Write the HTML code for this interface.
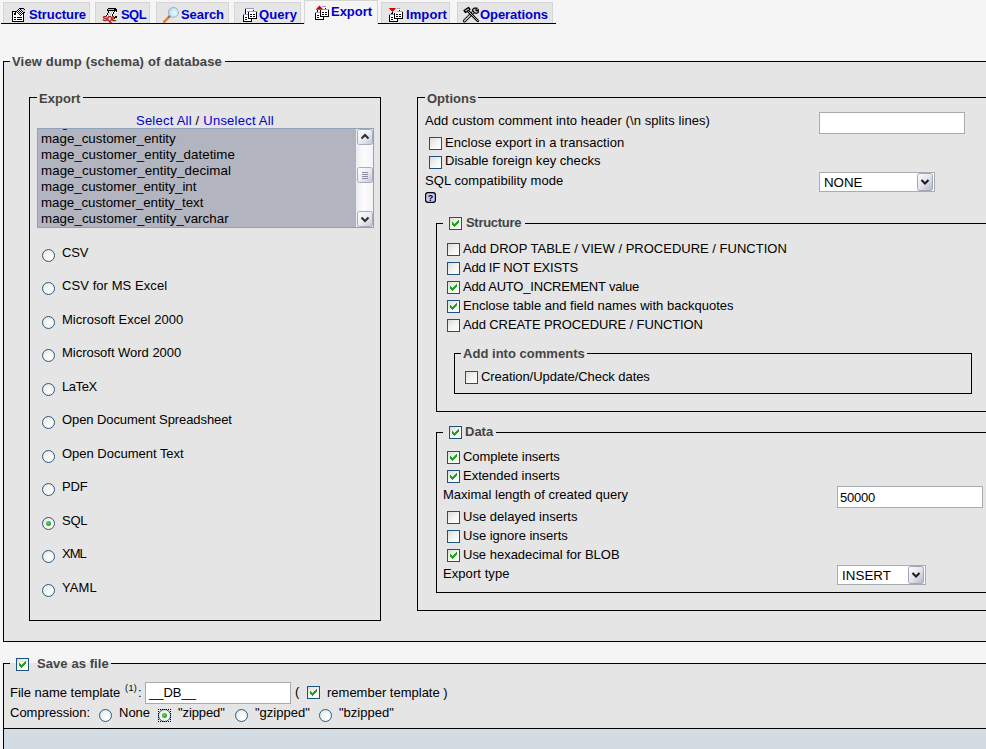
<!DOCTYPE html><html><head><meta charset="utf-8"><title>Export</title><style>
html,body{margin:0;padding:0;}
body{width:986px;height:749px;overflow:hidden;background:#f5f5f5;font-family:"Liberation Sans",Arial,sans-serif;font-size:13px;color:#000;position:relative;}
.a{position:absolute;}
.t{position:absolute;white-space:nowrap;line-height:16px;height:16px;}
.b{font-weight:bold;}
.lg{color:#444;font-weight:bold;}
.fs{position:absolute;border:1px solid #000;background:#e5e5e5;box-sizing:border-box;}
.tab{position:absolute;background:#e5e5e5;border:1px solid #d5d5d5;border-bottom:0;box-sizing:border-box;}
.tab.act{background:#f5f5f5;}
.lnk{color:#00c;}
.cb{position:absolute;width:13px;height:13px;box-sizing:border-box;border:1px solid #1c5180;background:linear-gradient(135deg,#dcdcd7 0%,#f3f3ef 50%,#fff 100%);}
.rb{position:absolute;width:13px;height:13px;box-sizing:border-box;border:1px solid #2b5a80;border-radius:50%;background:radial-gradient(circle at 65% 65%,#fff 0%,#f3f3ef 50%,#dcdcd7 100%);}
.inp{position:absolute;box-sizing:border-box;border:1px solid #a5acb2;background:#fff;}
.fc{font-size:13.33px;}
.gap{position:absolute;height:3px;}
</style></head><body>
<div class="a" style="left:1px;top:23px;width:555px;height:1px;background:#000"></div>
<div class="tab" style="left:3px;top:2px;width:87px;height:21px"></div>
<span class="t b lnk" style="left:29px;top:7px;letter-spacing:-0.089px;">Structure</span>
<div class="tab" style="left:95px;top:2px;width:55px;height:21px"></div>
<span class="t b lnk" style="left:121px;top:7px;letter-spacing:-0.578px;">SQL</span>
<div class="tab" style="left:156px;top:2px;width:73px;height:21px"></div>
<span class="t b lnk" style="left:181px;top:7px;letter-spacing:-0.062px;">Search</span>
<div class="tab" style="left:234px;top:2px;width:67px;height:21px"></div>
<span class="t b lnk" style="left:259px;top:7px;letter-spacing:0.084px;">Query</span>
<div class="tab act" style="left:304px;top:0px;width:74px;height:24px"></div>
<span class="t b lnk" style="left:331px;top:4px;letter-spacing:-0.029px;">Export</span>
<div class="tab" style="left:381px;top:2px;width:69px;height:21px"></div>
<span class="t b lnk" style="left:406px;top:7px;letter-spacing:0.091px;">Import</span>
<div class="tab" style="left:457px;top:2px;width:96px;height:21px"></div>
<span class="t b lnk" style="left:480px;top:7px;letter-spacing:-0.062px;">Operations</span>
<svg class="a" style="left:0;top:0" width="560" height="24" viewBox="0 0 560 24"><g shape-rendering="crispEdges"><rect x="19" y="8" width="5" height="1" fill="#000"/><rect x="18" y="9" width="1" height="1" fill="#000"/><rect x="19" y="9" width="1" height="1" fill="#fff"/><rect x="20" y="9" width="1" height="1" fill="#000"/><rect x="21" y="9" width="3" height="1" fill="#c8c8e8"/><rect x="24" y="9" width="1" height="1" fill="#000"/><rect x="17" y="10" width="1" height="1" fill="#000"/><rect x="18" y="10" width="1" height="1" fill="#fff"/><rect x="19" y="10" width="1" height="1" fill="#000"/><rect x="20" y="10" width="1" height="1" fill="#fff"/><rect x="21" y="10" width="1" height="1" fill="#000"/><rect x="22" y="10" width="3" height="1" fill="#c8c8e8"/><rect x="12" y="11" width="5" height="1" fill="#000"/><rect x="17" y="11" width="1" height="1" fill="#fff"/><rect x="18" y="11" width="1" height="1" fill="#000"/><rect x="19" y="11" width="1" height="1" fill="#fff"/><rect x="20" y="11" width="1" height="1" fill="#000"/><rect x="21" y="11" width="1" height="1" fill="#fff"/><rect x="22" y="11" width="1" height="1" fill="#000"/><rect x="23" y="11" width="2" height="1" fill="#c8c8e8"/><rect x="12" y="12" width="1" height="1" fill="#000"/><rect x="13" y="12" width="2" height="1" fill="#fff"/><rect x="15" y="12" width="1" height="1" fill="#000"/><rect x="16" y="12" width="1" height="1" fill="#fff"/><rect x="17" y="12" width="1" height="1" fill="#000"/><rect x="18" y="12" width="1" height="1" fill="#fff"/><rect x="19" y="12" width="1" height="1" fill="#000"/><rect x="20" y="12" width="1" height="1" fill="#fff"/><rect x="21" y="12" width="1" height="1" fill="#000"/><rect x="22" y="12" width="1" height="1" fill="#fff"/><rect x="23" y="12" width="2" height="1" fill="#000"/><rect x="12" y="13" width="1" height="1" fill="#000"/><rect x="13" y="13" width="1" height="1" fill="#fff"/><rect x="14" y="13" width="2" height="1" fill="#000"/><rect x="16" y="13" width="2" height="1" fill="#fff"/><rect x="18" y="13" width="1" height="1" fill="#000"/><rect x="19" y="13" width="1" height="1" fill="#fff"/><rect x="20" y="13" width="1" height="1" fill="#000"/><rect x="21" y="13" width="1" height="1" fill="#fff"/><rect x="22" y="13" width="2" height="1" fill="#000"/><rect x="12" y="14" width="1" height="1" fill="#000"/><rect x="13" y="14" width="1" height="1" fill="#fff"/><rect x="14" y="14" width="2" height="1" fill="#000"/><rect x="16" y="14" width="3" height="1" fill="#fff"/><rect x="19" y="14" width="1" height="1" fill="#000"/><rect x="20" y="14" width="1" height="1" fill="#fff"/><rect x="21" y="14" width="1" height="1" fill="#000"/><rect x="22" y="14" width="1" height="1" fill="#fff"/><rect x="23" y="14" width="1" height="1" fill="#000"/><rect x="12" y="15" width="1" height="1" fill="#000"/><rect x="13" y="15" width="7" height="1" fill="#fff"/><rect x="20" y="15" width="1" height="1" fill="#000"/><rect x="21" y="15" width="2" height="1" fill="#fff"/><rect x="23" y="15" width="1" height="1" fill="#000"/><rect x="12" y="16" width="1" height="1" fill="#000"/><rect x="13" y="16" width="10" height="1" fill="#fff"/><rect x="23" y="16" width="1" height="1" fill="#000"/><rect x="12" y="17" width="1" height="1" fill="#000"/><rect x="13" y="17" width="1" height="1" fill="#fff"/><rect x="14" y="17" width="2" height="1" fill="#000"/><rect x="16" y="17" width="1" height="1" fill="#fff"/><rect x="17" y="17" width="5" height="1" fill="#000"/><rect x="22" y="17" width="1" height="1" fill="#fff"/><rect x="23" y="17" width="1" height="1" fill="#000"/><rect x="12" y="18" width="1" height="1" fill="#000"/><rect x="13" y="18" width="10" height="1" fill="#fff"/><rect x="23" y="18" width="1" height="1" fill="#000"/><rect x="12" y="19" width="1" height="1" fill="#000"/><rect x="13" y="19" width="1" height="1" fill="#fff"/><rect x="14" y="19" width="2" height="1" fill="#000"/><rect x="16" y="19" width="1" height="1" fill="#fff"/><rect x="17" y="19" width="5" height="1" fill="#000"/><rect x="22" y="19" width="1" height="1" fill="#fff"/><rect x="23" y="19" width="1" height="1" fill="#000"/><rect x="12" y="20" width="1" height="1" fill="#000"/><rect x="13" y="20" width="10" height="1" fill="#fff"/><rect x="23" y="20" width="1" height="1" fill="#000"/><rect x="12" y="21" width="12" height="1" fill="#000"/><rect x="108" y="8" width="8" height="1" fill="#000"/><rect x="107" y="9" width="1" height="1" fill="#000"/><rect x="108" y="9" width="6" height="1" fill="#bbb"/><rect x="114" y="9" width="3" height="1" fill="#000"/><rect x="107" y="10" width="10" height="1" fill="#000"/><rect x="108" y="11" width="1" height="1" fill="#000"/><rect x="109" y="11" width="1" height="1" fill="#fff"/><rect x="110" y="11" width="1" height="1" fill="#bbb"/><rect x="111" y="11" width="1" height="1" fill="#fff"/><rect x="112" y="11" width="1" height="1" fill="#bbb"/><rect x="113" y="11" width="1" height="1" fill="#fff"/><rect x="114" y="11" width="1" height="1" fill="#000"/><rect x="115" y="11" width="1" height="1" fill="#fff"/><rect x="116" y="11" width="1" height="1" fill="#000"/><rect x="108" y="12" width="1" height="1" fill="#000"/><rect x="109" y="12" width="1" height="1" fill="#bbb"/><rect x="110" y="12" width="1" height="1" fill="#fff"/><rect x="111" y="12" width="1" height="1" fill="#bbb"/><rect x="112" y="12" width="1" height="1" fill="#fff"/><rect x="113" y="12" width="1" height="1" fill="#000"/><rect x="114" y="12" width="1" height="1" fill="#fff"/><rect x="107" y="13" width="1" height="1" fill="#000"/><rect x="108" y="13" width="1" height="1" fill="#fff"/><rect x="109" y="13" width="1" height="1" fill="#bbb"/><rect x="110" y="13" width="1" height="1" fill="#fff"/><rect x="111" y="13" width="1" height="1" fill="#bbb"/><rect x="112" y="13" width="1" height="1" fill="#fff"/><rect x="113" y="13" width="1" height="1" fill="#000"/><rect x="107" y="14" width="1" height="1" fill="#000"/><rect x="108" y="14" width="1" height="1" fill="#bbb"/><rect x="109" y="14" width="1" height="1" fill="#fff"/><rect x="110" y="14" width="1" height="1" fill="#bbb"/><rect x="111" y="14" width="1" height="1" fill="#fff"/><rect x="112" y="14" width="1" height="1" fill="#000"/><rect x="113" y="14" width="1" height="1" fill="#fff"/><rect x="106" y="15" width="1" height="1" fill="#000"/><rect x="107" y="15" width="1" height="1" fill="#fff"/><rect x="108" y="15" width="1" height="1" fill="#bbb"/><rect x="109" y="15" width="1" height="1" fill="#fff"/><rect x="110" y="15" width="1" height="1" fill="#bbb"/><rect x="111" y="15" width="1" height="1" fill="#fff"/><rect x="112" y="15" width="1" height="1" fill="#000"/><rect x="113" y="16" width="1" height="1" fill="#000"/><rect x="114" y="16" width="1" height="1" fill="#fff"/><rect x="115" y="16" width="2" height="1" fill="#000"/><rect x="114" y="17" width="3" height="1" fill="#000"/><rect x="114" y="18" width="1" height="1" fill="#000"/><rect x="245" y="8" width="9" height="1" fill="#9a9acb"/><rect x="245" y="9" width="1" height="1" fill="#000"/><rect x="246" y="9" width="7" height="1" fill="#fff"/><rect x="245" y="10" width="1" height="1" fill="#000"/><rect x="246" y="10" width="7" height="1" fill="#fff"/><rect x="253" y="10" width="1" height="1" fill="#000"/><rect x="254" y="10" width="1" height="1" fill="#fff"/><rect x="245" y="11" width="1" height="1" fill="#000"/><rect x="246" y="11" width="1" height="1" fill="#fff"/><rect x="247" y="11" width="10" height="1" fill="#9a9acb"/><rect x="245" y="12" width="1" height="1" fill="#000"/><rect x="246" y="12" width="2" height="1" fill="#fff"/><rect x="248" y="12" width="1" height="1" fill="#000"/><rect x="249" y="12" width="7" height="1" fill="#fff"/><rect x="256" y="12" width="1" height="1" fill="#000"/><rect x="245" y="13" width="1" height="1" fill="#000"/><rect x="246" y="13" width="2" height="1" fill="#fff"/><rect x="248" y="13" width="1" height="1" fill="#000"/><rect x="249" y="13" width="7" height="1" fill="#fff"/><rect x="256" y="13" width="1" height="1" fill="#000"/><rect x="243" y="14" width="5" height="1" fill="#9a9acb"/><rect x="248" y="14" width="1" height="1" fill="#000"/><rect x="249" y="14" width="1" height="1" fill="#fff"/><rect x="250" y="14" width="2" height="1" fill="#000"/><rect x="252" y="14" width="1" height="1" fill="#fff"/><rect x="253" y="14" width="2" height="1" fill="#000"/><rect x="255" y="14" width="1" height="1" fill="#fff"/><rect x="256" y="14" width="1" height="1" fill="#000"/><rect x="243" y="15" width="1" height="1" fill="#000"/><rect x="244" y="15" width="4" height="1" fill="#fff"/><rect x="248" y="15" width="1" height="1" fill="#000"/><rect x="249" y="15" width="7" height="1" fill="#fff"/><rect x="256" y="15" width="1" height="1" fill="#000"/><rect x="243" y="16" width="1" height="1" fill="#000"/><rect x="244" y="16" width="4" height="1" fill="#fff"/><rect x="248" y="16" width="1" height="1" fill="#000"/><rect x="249" y="16" width="1" height="1" fill="#fff"/><rect x="250" y="16" width="2" height="1" fill="#000"/><rect x="252" y="16" width="1" height="1" fill="#fff"/><rect x="253" y="16" width="2" height="1" fill="#000"/><rect x="255" y="16" width="1" height="1" fill="#fff"/><rect x="256" y="16" width="1" height="1" fill="#000"/><rect x="243" y="17" width="1" height="1" fill="#000"/><rect x="244" y="17" width="1" height="1" fill="#fff"/><rect x="245" y="17" width="2" height="1" fill="#000"/><rect x="247" y="17" width="1" height="1" fill="#fff"/><rect x="248" y="17" width="1" height="1" fill="#000"/><rect x="249" y="17" width="7" height="1" fill="#fff"/><rect x="256" y="17" width="1" height="1" fill="#000"/><rect x="243" y="18" width="1" height="1" fill="#000"/><rect x="244" y="18" width="4" height="1" fill="#fff"/><rect x="248" y="18" width="9" height="1" fill="#000"/><rect x="243" y="19" width="1" height="1" fill="#000"/><rect x="244" y="19" width="1" height="1" fill="#fff"/><rect x="245" y="19" width="2" height="1" fill="#000"/><rect x="247" y="19" width="4" height="1" fill="#fff"/><rect x="251" y="19" width="1" height="1" fill="#000"/><rect x="243" y="20" width="1" height="1" fill="#000"/><rect x="244" y="20" width="7" height="1" fill="#fff"/><rect x="251" y="20" width="1" height="1" fill="#000"/><rect x="243" y="21" width="9" height="1" fill="#000"/><rect x="317" y="6" width="9" height="1" fill="#9a9acb"/><rect x="317" y="7" width="1" height="1" fill="#000"/><rect x="318" y="7" width="7" height="1" fill="#fff"/><rect x="317" y="8" width="1" height="1" fill="#000"/><rect x="318" y="8" width="7" height="1" fill="#fff"/><rect x="325" y="8" width="1" height="1" fill="#000"/><rect x="326" y="8" width="1" height="1" fill="#fff"/><rect x="317" y="9" width="1" height="1" fill="#000"/><rect x="318" y="9" width="1" height="1" fill="#fff"/><rect x="319" y="9" width="10" height="1" fill="#9a9acb"/><rect x="317" y="10" width="1" height="1" fill="#000"/><rect x="318" y="10" width="2" height="1" fill="#fff"/><rect x="320" y="10" width="1" height="1" fill="#000"/><rect x="321" y="10" width="7" height="1" fill="#fff"/><rect x="328" y="10" width="1" height="1" fill="#000"/><rect x="317" y="11" width="1" height="1" fill="#000"/><rect x="318" y="11" width="2" height="1" fill="#fff"/><rect x="320" y="11" width="1" height="1" fill="#000"/><rect x="321" y="11" width="7" height="1" fill="#fff"/><rect x="328" y="11" width="1" height="1" fill="#000"/><rect x="315" y="12" width="5" height="1" fill="#9a9acb"/><rect x="320" y="12" width="1" height="1" fill="#000"/><rect x="321" y="12" width="1" height="1" fill="#fff"/><rect x="322" y="12" width="2" height="1" fill="#000"/><rect x="324" y="12" width="1" height="1" fill="#fff"/><rect x="325" y="12" width="2" height="1" fill="#000"/><rect x="327" y="12" width="1" height="1" fill="#fff"/><rect x="328" y="12" width="1" height="1" fill="#000"/><rect x="315" y="13" width="1" height="1" fill="#000"/><rect x="316" y="13" width="4" height="1" fill="#fff"/><rect x="320" y="13" width="1" height="1" fill="#000"/><rect x="321" y="13" width="7" height="1" fill="#fff"/><rect x="328" y="13" width="1" height="1" fill="#000"/><rect x="315" y="14" width="1" height="1" fill="#000"/><rect x="316" y="14" width="4" height="1" fill="#fff"/><rect x="320" y="14" width="1" height="1" fill="#000"/><rect x="321" y="14" width="1" height="1" fill="#fff"/><rect x="322" y="14" width="2" height="1" fill="#000"/><rect x="324" y="14" width="1" height="1" fill="#fff"/><rect x="325" y="14" width="2" height="1" fill="#000"/><rect x="327" y="14" width="1" height="1" fill="#fff"/><rect x="328" y="14" width="1" height="1" fill="#000"/><rect x="315" y="15" width="1" height="1" fill="#000"/><rect x="316" y="15" width="1" height="1" fill="#fff"/><rect x="317" y="15" width="2" height="1" fill="#000"/><rect x="319" y="15" width="1" height="1" fill="#fff"/><rect x="320" y="15" width="1" height="1" fill="#000"/><rect x="321" y="15" width="7" height="1" fill="#fff"/><rect x="328" y="15" width="1" height="1" fill="#000"/><rect x="315" y="16" width="1" height="1" fill="#000"/><rect x="316" y="16" width="4" height="1" fill="#fff"/><rect x="320" y="16" width="9" height="1" fill="#000"/><rect x="315" y="17" width="1" height="1" fill="#000"/><rect x="316" y="17" width="1" height="1" fill="#fff"/><rect x="317" y="17" width="2" height="1" fill="#000"/><rect x="319" y="17" width="4" height="1" fill="#fff"/><rect x="323" y="17" width="1" height="1" fill="#000"/><rect x="315" y="18" width="1" height="1" fill="#000"/><rect x="316" y="18" width="7" height="1" fill="#fff"/><rect x="323" y="18" width="1" height="1" fill="#000"/><rect x="315" y="19" width="9" height="1" fill="#000"/><rect x="315" y="8" width="8" height="2" fill="#f5f5f5"/><rect x="317" y="6" width="5" height="2" fill="#f5f5f5"/></g><path d="M319.5 5.5 L323.5 9.8 L315.5 9.8 Z" fill="#d40000"/><g shape-rendering="crispEdges"><rect x="391" y="8" width="9" height="1" fill="#9a9acb"/><rect x="391" y="9" width="1" height="1" fill="#000"/><rect x="392" y="9" width="7" height="1" fill="#fff"/><rect x="391" y="10" width="1" height="1" fill="#000"/><rect x="392" y="10" width="7" height="1" fill="#fff"/><rect x="399" y="10" width="1" height="1" fill="#000"/><rect x="400" y="10" width="1" height="1" fill="#fff"/><rect x="391" y="11" width="1" height="1" fill="#000"/><rect x="392" y="11" width="1" height="1" fill="#fff"/><rect x="393" y="11" width="10" height="1" fill="#9a9acb"/><rect x="391" y="12" width="1" height="1" fill="#000"/><rect x="392" y="12" width="2" height="1" fill="#fff"/><rect x="394" y="12" width="1" height="1" fill="#000"/><rect x="395" y="12" width="7" height="1" fill="#fff"/><rect x="402" y="12" width="1" height="1" fill="#000"/><rect x="391" y="13" width="1" height="1" fill="#000"/><rect x="392" y="13" width="2" height="1" fill="#fff"/><rect x="394" y="13" width="1" height="1" fill="#000"/><rect x="395" y="13" width="7" height="1" fill="#fff"/><rect x="402" y="13" width="1" height="1" fill="#000"/><rect x="389" y="14" width="5" height="1" fill="#9a9acb"/><rect x="394" y="14" width="1" height="1" fill="#000"/><rect x="395" y="14" width="1" height="1" fill="#fff"/><rect x="396" y="14" width="2" height="1" fill="#000"/><rect x="398" y="14" width="1" height="1" fill="#fff"/><rect x="399" y="14" width="2" height="1" fill="#000"/><rect x="401" y="14" width="1" height="1" fill="#fff"/><rect x="402" y="14" width="1" height="1" fill="#000"/><rect x="389" y="15" width="1" height="1" fill="#000"/><rect x="390" y="15" width="4" height="1" fill="#fff"/><rect x="394" y="15" width="1" height="1" fill="#000"/><rect x="395" y="15" width="7" height="1" fill="#fff"/><rect x="402" y="15" width="1" height="1" fill="#000"/><rect x="389" y="16" width="1" height="1" fill="#000"/><rect x="390" y="16" width="4" height="1" fill="#fff"/><rect x="394" y="16" width="1" height="1" fill="#000"/><rect x="395" y="16" width="1" height="1" fill="#fff"/><rect x="396" y="16" width="2" height="1" fill="#000"/><rect x="398" y="16" width="1" height="1" fill="#fff"/><rect x="399" y="16" width="2" height="1" fill="#000"/><rect x="401" y="16" width="1" height="1" fill="#fff"/><rect x="402" y="16" width="1" height="1" fill="#000"/><rect x="389" y="17" width="1" height="1" fill="#000"/><rect x="390" y="17" width="1" height="1" fill="#fff"/><rect x="391" y="17" width="2" height="1" fill="#000"/><rect x="393" y="17" width="1" height="1" fill="#fff"/><rect x="394" y="17" width="1" height="1" fill="#000"/><rect x="395" y="17" width="7" height="1" fill="#fff"/><rect x="402" y="17" width="1" height="1" fill="#000"/><rect x="389" y="18" width="1" height="1" fill="#000"/><rect x="390" y="18" width="4" height="1" fill="#fff"/><rect x="394" y="18" width="9" height="1" fill="#000"/><rect x="389" y="19" width="1" height="1" fill="#000"/><rect x="390" y="19" width="1" height="1" fill="#fff"/><rect x="391" y="19" width="2" height="1" fill="#000"/><rect x="393" y="19" width="4" height="1" fill="#fff"/><rect x="397" y="19" width="1" height="1" fill="#000"/><rect x="389" y="20" width="1" height="1" fill="#000"/><rect x="390" y="20" width="7" height="1" fill="#fff"/><rect x="397" y="20" width="1" height="1" fill="#000"/><rect x="389" y="21" width="9" height="1" fill="#000"/><rect x="388" y="7" width="9" height="6" fill="#e5e5e5"/></g><path d="M388.8 8 L396.2 8 L392.5 12 Z" fill="#d40000"/><rect x="392" y="12" width="1" height="2" fill="#000"/><text x="102.8" y="21" font-family="Liberation Sans,Arial,sans-serif" font-size="6.8" font-weight="bold" fill="#a80000" stroke="#a80000" stroke-width="0.25" textLength="13.4" lengthAdjust="spacing">SQL</text><defs><radialGradient id="lens" cx="0.6" cy="0.55" r="0.7"><stop offset="0" stop-color="#e4fbfb"/><stop offset="0.6" stop-color="#c2e8f6"/><stop offset="1" stop-color="#8cc4ea"/></radialGradient></defs><line x1="169.3" y1="16.6" x2="164.2" y2="21.8" stroke="#e0802f" stroke-width="2.6" stroke-linecap="round"/><line x1="169.8" y1="16.2" x2="168.6" y2="17.4" stroke="#777" stroke-width="2.4"/><circle cx="173.4" cy="12.4" r="4.9" fill="url(#lens)" stroke="#8a8f94" stroke-width="0.9" stroke-dasharray="2.2 1"/><g fill="none" stroke-linecap="round"><path d="M464.5 20.8 L474.8 10.6" stroke="#000" stroke-width="3.2"/><path d="M464.6 20.7 L474.8 10.6" stroke="#c8c8dc" stroke-width="1.5"/><path d="M468 11 L477.8 20.8" stroke="#000" stroke-width="2.6"/><path d="M468 11 L477.8 20.8" stroke="#c8c8dc" stroke-width="0.9"/><path d="M464 10.5 L468.5 7.5 L470 9.5 L465.5 12.5 Z" fill="#b8b8d0" stroke="#000" stroke-width="1.3" stroke-linejoin="round"/><path d="M472.4 9.6 L474 8.1 L477.2 8.1 L475.7 10 L477.2 11 L478.3 9.4 L478.3 12.6 L476.2 13.4 L474.3 12.6 L473.2 11.2 Z" fill="#c8c8dc" stroke="#000" stroke-width="1.1" stroke-linejoin="round"/></g></svg>
<div class="fs" style="left:3px;top:61px;width:1000px;height:581px"></div>
<div class="a" style="left:10px;top:54px;width:215px;height:7px;background:#f5f5f5"></div>
<div class="a" style="left:10px;top:61px;width:215px;height:1px;background:#e5e5e5"></div>
<span class="t lg" style="left:12px;top:54px;letter-spacing:0.169px;">View dump (schema) of database</span>
<div class="fs" style="left:29px;top:97px;width:352px;height:524px"></div>
<div class="a" style="left:37px;top:97px;width:46px;height:1px;background:#e5e5e5"></div>
<span class="t lg" style="left:39px;top:91px;letter-spacing:0.055px;">Export</span>
<span class="t " style="left:136px;top:113px;letter-spacing:0.230px;"><span class="lnk">Select All</span> / <span class="lnk">Unselect All</span></span>
<div class="a" style="left:37px;top:128px;width:337px;height:100px;box-sizing:border-box;border:1px solid #8fa3bd;background:#fff;overflow:hidden"><div class="a" style="left:0;top:0;width:318px;height:98px;background:#b2b4bf"></div><div class="a" style="left:318px;top:0;width:17px;height:98px;background:linear-gradient(90deg,#e9e9f0,#fbfbfd 40%,#f4f4f8)"></div><svg class="a" style="left:319px;top:0px" width="16" height="16" viewBox="0 0 16 16"><defs><linearGradient id="sbup" x1="0" y1="0" x2="1" y2="1"><stop offset="0" stop-color="#ffffff"/><stop offset="0.5" stop-color="#ececf2"/><stop offset="1" stop-color="#c4c5d6"/></linearGradient></defs><rect x="0.5" y="0.5" width="15" height="15" rx="2" fill="url(#sbup)" stroke="#a9abbd"/><path d="M4.5 9.5 L8 6 L11.5 9.5" fill="none" stroke="#2b2b33" stroke-width="2"/></svg><svg class="a" style="left:319px;top:38px" width="16" height="16" viewBox="0 0 16 16"><defs><linearGradient id="sbthumb" x1="0" y1="0" x2="1" y2="1"><stop offset="0" stop-color="#ffffff"/><stop offset="0.5" stop-color="#ececf2"/><stop offset="1" stop-color="#c4c5d6"/></linearGradient></defs><rect x="0.5" y="0.5" width="15" height="15" rx="2" fill="url(#sbthumb)" stroke="#a9abbd"/><path d="M5 5.5h6M5 7.5h6M5 9.5h6M5 11.5h6" stroke="#8e8ea0" stroke-width="1"/></svg><svg class="a" style="left:319px;top:82px" width="16" height="16" viewBox="0 0 16 16"><defs><linearGradient id="sbdown" x1="0" y1="0" x2="1" y2="1"><stop offset="0" stop-color="#ffffff"/><stop offset="0.5" stop-color="#ececf2"/><stop offset="1" stop-color="#c4c5d6"/></linearGradient></defs><rect x="0.5" y="0.5" width="15" height="15" rx="2" fill="url(#sbdown)" stroke="#a9abbd"/><path d="M4.5 6.5 L8 10 L11.5 6.5" fill="none" stroke="#2b2b33" stroke-width="2"/></svg><div class="a" style="left:25px;top:0px;width:4px;height:1px;background:#333"></div></div>
<span class="t fc" style="left:41px;top:131px;letter-spacing:-0.007px;">mage_customer_entity</span>
<span class="t fc" style="left:41px;top:147px;letter-spacing:0.018px;">mage_customer_entity_datetime</span>
<span class="t fc" style="left:41px;top:163px;letter-spacing:0.062px;">mage_customer_entity_decimal</span>
<span class="t fc" style="left:41px;top:179px;letter-spacing:-0.039px;">mage_customer_entity_int</span>
<span class="t fc" style="left:41px;top:195px;letter-spacing:-0.057px;">mage_customer_entity_text</span>
<span class="t fc" style="left:41px;top:211px;letter-spacing:0.033px;">mage_customer_entity_varchar</span>
<div class="rb" style="left:42px;top:249px"></div>
<span class="t " style="left:62px;top:245px;letter-spacing:-0.111px;">CSV</span>
<div class="rb" style="left:42px;top:282px"></div>
<span class="t " style="left:62px;top:278px;letter-spacing:0.073px;">CSV for MS Excel</span>
<div class="rb" style="left:42px;top:316px"></div>
<span class="t " style="left:62px;top:312px;letter-spacing:0.026px;">Microsoft Excel 2000</span>
<div class="rb" style="left:42px;top:349px"></div>
<span class="t " style="left:62px;top:345px;letter-spacing:-0.026px;">Microsoft Word 2000</span>
<div class="rb" style="left:42px;top:383px"></div>
<span class="t " style="left:62px;top:379px;letter-spacing:-0.435px;">LaTeX</span>
<div class="rb" style="left:42px;top:416px"></div>
<span class="t " style="left:62px;top:412px;letter-spacing:-0.084px;">Open Document Spreadsheet</span>
<div class="rb" style="left:42px;top:450px"></div>
<span class="t " style="left:62px;top:446px;letter-spacing:-0.011px;">Open Document Text</span>
<div class="rb" style="left:42px;top:483px"></div>
<span class="t " style="left:62px;top:479px;letter-spacing:-0.200px;">PDF</span>
<div class="rb" style="left:42px;top:517px"><div class="a" style="left:3px;top:3px;width:5px;height:5px;border-radius:50%;background:radial-gradient(circle at 40% 40%,#6ad66a,#21a121 70%)"></div></div>
<span class="t " style="left:62px;top:513px;letter-spacing:-0.205px;">SQL</span>
<div class="rb" style="left:42px;top:550px"></div>
<span class="t " style="left:62px;top:546px;letter-spacing:-0.978px;">XML</span>
<div class="rb" style="left:42px;top:584px"></div>
<span class="t " style="left:62px;top:580px;letter-spacing:0.066px;">YAML</span>
<div class="fs" style="left:417px;top:97px;width:600px;height:514px"></div>
<div class="a" style="left:425px;top:97px;width:53px;height:1px;background:#e5e5e5"></div>
<span class="t lg" style="left:427px;top:91px;">Options</span>
<span class="t " style="left:425px;top:113px;letter-spacing:0.082px;">Add custom comment into header (\n splits lines)</span>
<div class="inp" style="left:819px;top:112px;width:146px;height:22px"></div>
<div class="cb" style="left:429px;top:137px"></div>
<span class="t " style="left:445px;top:135px;letter-spacing:0.046px;">Enclose export in a transaction</span>
<div class="cb" style="left:429px;top:156px"></div>
<span class="t " style="left:445px;top:153px;letter-spacing:0.033px;">Disable foreign key checks</span>
<span class="t " style="left:425px;top:173px;letter-spacing:0.068px;">SQL compatibility mode</span>
<div class="inp" style="left:819px;top:172px;width:116px;height:20px"></div>
<svg class="a" style="left:917px;top:173px" width="16" height="18" viewBox="0 0 16 18"><defs><linearGradient id="sel1" x1="0" y1="0" x2="1" y2="1"><stop offset="0" stop-color="#fdfdfe"/><stop offset="0.5" stop-color="#e4e4ec"/><stop offset="1" stop-color="#b4b5c8"/></linearGradient></defs><rect x="0.5" y="0.5" width="15" height="17" rx="2" fill="url(#sel1)" stroke="#a3a5b8"/><path d="M4.5 7 L8 10.5 L11.5 7" fill="none" stroke="#1a1a1f" stroke-width="2.1"/></svg>
<span class="t fc" style="left:824px;top:175px;letter-spacing:-0.054px;">NONE</span>
<svg class="a" style="left:425px;top:192px" width="11" height="11" viewBox="0 0 11 11"><rect x="0.6" y="0.6" width="9.8" height="9.8" rx="2.4" fill="#c9c9f7" stroke="#000" stroke-width="1.2"/><text x="5.5" y="8.6" text-anchor="middle" font-family="Liberation Sans,Arial,sans-serif" font-size="9" font-weight="bold" fill="#000">?</text></svg>
<div class="fs" style="left:436px;top:223px;width:600px;height:189px"></div>
<div class="a" style="left:443px;top:223px;width:82px;height:1px;background:#e5e5e5"></div>
<div class="cb" style="left:449px;top:217px"><svg class="a" style="left:2px;top:2px" width="7" height="7" viewBox="0 0 7 7" shape-rendering="crispEdges"><path d="M0 2h1v1h1v1h1v-1h1v-1h1v-1h1v-1h1v3h-1v1h-1v1h-1v1h-1v1h-1v-1h-1v-1h-1z" fill="#21a121"/></svg></div>
<span class="t lg" style="left:466px;top:215px;letter-spacing:-0.300px;">Structure</span>
<div class="cb" style="left:447px;top:243px"></div>
<span class="t " style="left:463px;top:241px;letter-spacing:0.004px;">Add DROP TABLE / VIEW / PROCEDURE / FUNCTION</span>
<div class="cb" style="left:447px;top:262px"></div>
<span class="t " style="left:463px;top:260px;letter-spacing:-0.233px;">Add IF NOT EXISTS</span>
<div class="cb" style="left:447px;top:281px"><svg class="a" style="left:2px;top:2px" width="7" height="7" viewBox="0 0 7 7" shape-rendering="crispEdges"><path d="M0 2h1v1h1v1h1v-1h1v-1h1v-1h1v-1h1v3h-1v1h-1v1h-1v1h-1v1h-1v-1h-1v-1h-1z" fill="#21a121"/></svg></div>
<span class="t " style="left:463px;top:279px;letter-spacing:-0.203px;">Add AUTO_INCREMENT value</span>
<div class="cb" style="left:447px;top:300px"><svg class="a" style="left:2px;top:2px" width="7" height="7" viewBox="0 0 7 7" shape-rendering="crispEdges"><path d="M0 2h1v1h1v1h1v-1h1v-1h1v-1h1v-1h1v3h-1v1h-1v1h-1v1h-1v1h-1v-1h-1v-1h-1z" fill="#21a121"/></svg></div>
<span class="t " style="left:463px;top:298px;letter-spacing:0.005px;">Enclose table and field names with backquotes</span>
<div class="cb" style="left:447px;top:319px"></div>
<span class="t " style="left:463px;top:317px;letter-spacing:-0.106px;">Add CREATE PROCEDURE / FUNCTION</span>
<div class="fs" style="left:454px;top:353px;width:518px;height:41px"></div>
<div class="a" style="left:461px;top:353px;width:126px;height:1px;background:#e5e5e5"></div>
<span class="t lg" style="left:463px;top:346px;letter-spacing:0.027px;">Add into comments</span>
<div class="cb" style="left:465px;top:371px"></div>
<span class="t " style="left:481px;top:369px;letter-spacing:-0.065px;">Creation/Update/Check dates</span>
<div class="fs" style="left:436px;top:432px;width:600px;height:161px"></div>
<div class="a" style="left:443px;top:432px;width:53px;height:1px;background:#e5e5e5"></div>
<div class="cb" style="left:449px;top:426px"><svg class="a" style="left:2px;top:2px" width="7" height="7" viewBox="0 0 7 7" shape-rendering="crispEdges"><path d="M0 2h1v1h1v1h1v-1h1v-1h1v-1h1v-1h1v3h-1v1h-1v1h-1v1h-1v1h-1v-1h-1v-1h-1z" fill="#21a121"/></svg></div>
<span class="t lg" style="left:465px;top:424px;">Data</span>
<div class="cb" style="left:447px;top:451px"><svg class="a" style="left:2px;top:2px" width="7" height="7" viewBox="0 0 7 7" shape-rendering="crispEdges"><path d="M0 2h1v1h1v1h1v-1h1v-1h1v-1h1v-1h1v3h-1v1h-1v1h-1v1h-1v1h-1v-1h-1v-1h-1z" fill="#21a121"/></svg></div>
<span class="t " style="left:463px;top:449px;letter-spacing:-0.047px;">Complete inserts</span>
<div class="cb" style="left:447px;top:470px"><svg class="a" style="left:2px;top:2px" width="7" height="7" viewBox="0 0 7 7" shape-rendering="crispEdges"><path d="M0 2h1v1h1v1h1v-1h1v-1h1v-1h1v-1h1v3h-1v1h-1v1h-1v1h-1v1h-1v-1h-1v-1h-1z" fill="#21a121"/></svg></div>
<span class="t " style="left:463px;top:468px;letter-spacing:-0.003px;">Extended inserts</span>
<span class="t " style="left:443px;top:487px;">Maximal length of created query</span>
<div class="inp" style="left:837px;top:486px;width:146px;height:22px"></div>
<span class="t " style="left:840px;top:489.5px;letter-spacing:-0.231px;">50000</span>
<div class="cb" style="left:447px;top:511px"></div>
<span class="t " style="left:463px;top:509px;letter-spacing:0.017px;">Use delayed inserts</span>
<div class="cb" style="left:447px;top:530px"></div>
<span class="t " style="left:463px;top:528px;">Use ignore inserts</span>
<div class="cb" style="left:447px;top:549px"><svg class="a" style="left:2px;top:2px" width="7" height="7" viewBox="0 0 7 7" shape-rendering="crispEdges"><path d="M0 2h1v1h1v1h1v-1h1v-1h1v-1h1v-1h1v3h-1v1h-1v1h-1v1h-1v1h-1v-1h-1v-1h-1z" fill="#21a121"/></svg></div>
<span class="t " style="left:463px;top:547px;letter-spacing:-0.008px;">Use hexadecimal for BLOB</span>
<span class="t " style="left:443px;top:566px;letter-spacing:0.067px;">Export type</span>
<div class="inp" style="left:837px;top:565px;width:89px;height:20px"></div>
<svg class="a" style="left:908px;top:566px" width="16" height="18" viewBox="0 0 16 18"><defs><linearGradient id="sel2" x1="0" y1="0" x2="1" y2="1"><stop offset="0" stop-color="#fdfdfe"/><stop offset="0.5" stop-color="#e4e4ec"/><stop offset="1" stop-color="#b4b5c8"/></linearGradient></defs><rect x="0.5" y="0.5" width="15" height="17" rx="2" fill="url(#sel2)" stroke="#a3a5b8"/><path d="M4.5 7 L8 10.5 L11.5 7" fill="none" stroke="#1a1a1f" stroke-width="2.1"/></svg>
<span class="t fc" style="left:842px;top:568px;letter-spacing:0.060px;">INSERT</span>
<div class="fs" style="left:3px;top:663px;width:1000px;height:66px"></div>
<div class="a" style="left:10px;top:655px;width:101px;height:8px;background:#f5f5f5"></div>
<div class="a" style="left:10px;top:663px;width:101px;height:1px;background:#e5e5e5"></div>
<div class="cb" style="left:16px;top:658px"><svg class="a" style="left:2px;top:2px" width="7" height="7" viewBox="0 0 7 7" shape-rendering="crispEdges"><path d="M0 2h1v1h1v1h1v-1h1v-1h1v-1h1v-1h1v3h-1v1h-1v1h-1v1h-1v1h-1v-1h-1v-1h-1z" fill="#21a121"/></svg></div>
<span class="t lg" style="left:37px;top:656px;letter-spacing:0.081px;">Save as file</span>
<span class="t " style="left:10px;top:685px;letter-spacing:-0.015px;">File name template</span>
<span class="t " style="left:125px;top:680px;font-size:9px;letter-spacing:0.400px;">(1)</span>
<span class="t " style="left:138px;top:685px;">:</span>
<div class="inp" style="left:145px;top:682px;width:146px;height:22px"></div>
<span class="t " style="left:149px;top:685px;">__DB__</span>
<span class="t " style="left:295px;top:684px;">(</span>
<div class="cb" style="left:307px;top:686px"><svg class="a" style="left:2px;top:2px" width="7" height="7" viewBox="0 0 7 7" shape-rendering="crispEdges"><path d="M0 2h1v1h1v1h1v-1h1v-1h1v-1h1v-1h1v3h-1v1h-1v1h-1v1h-1v1h-1v-1h-1v-1h-1z" fill="#21a121"/></svg></div>
<span class="t " style="left:327px;top:685px;">remember template )</span>
<span class="t " style="left:10px;top:705px;">Compression:</span>
<div class="rb" style="left:99px;top:709px"></div>
<span class="t " style="left:119px;top:705px;">None</span>
<div class="rb" style="left:158px;top:709px"><div class="a" style="left:3px;top:3px;width:5px;height:5px;border-radius:50%;background:radial-gradient(circle at 40% 40%,#6ad66a,#21a121 70%)"></div></div>
<div class="a" style="left:158px;top:709px;width:11px;height:11px;border:1px dotted #000"></div>
<span class="t " style="left:178px;top:705px;letter-spacing:-0.106px;">"zipped"</span>
<div class="rb" style="left:235px;top:709px"></div>
<span class="t " style="left:255px;top:705px;">"gzipped"</span>
<div class="rb" style="left:319px;top:709px"></div>
<span class="t " style="left:339px;top:705px;">"bzipped"</span>
<div class="a" style="left:3px;top:729px;width:1000px;height:30px;background:#d3dce3;border-left:1px solid #000"></div>
</body></html>
